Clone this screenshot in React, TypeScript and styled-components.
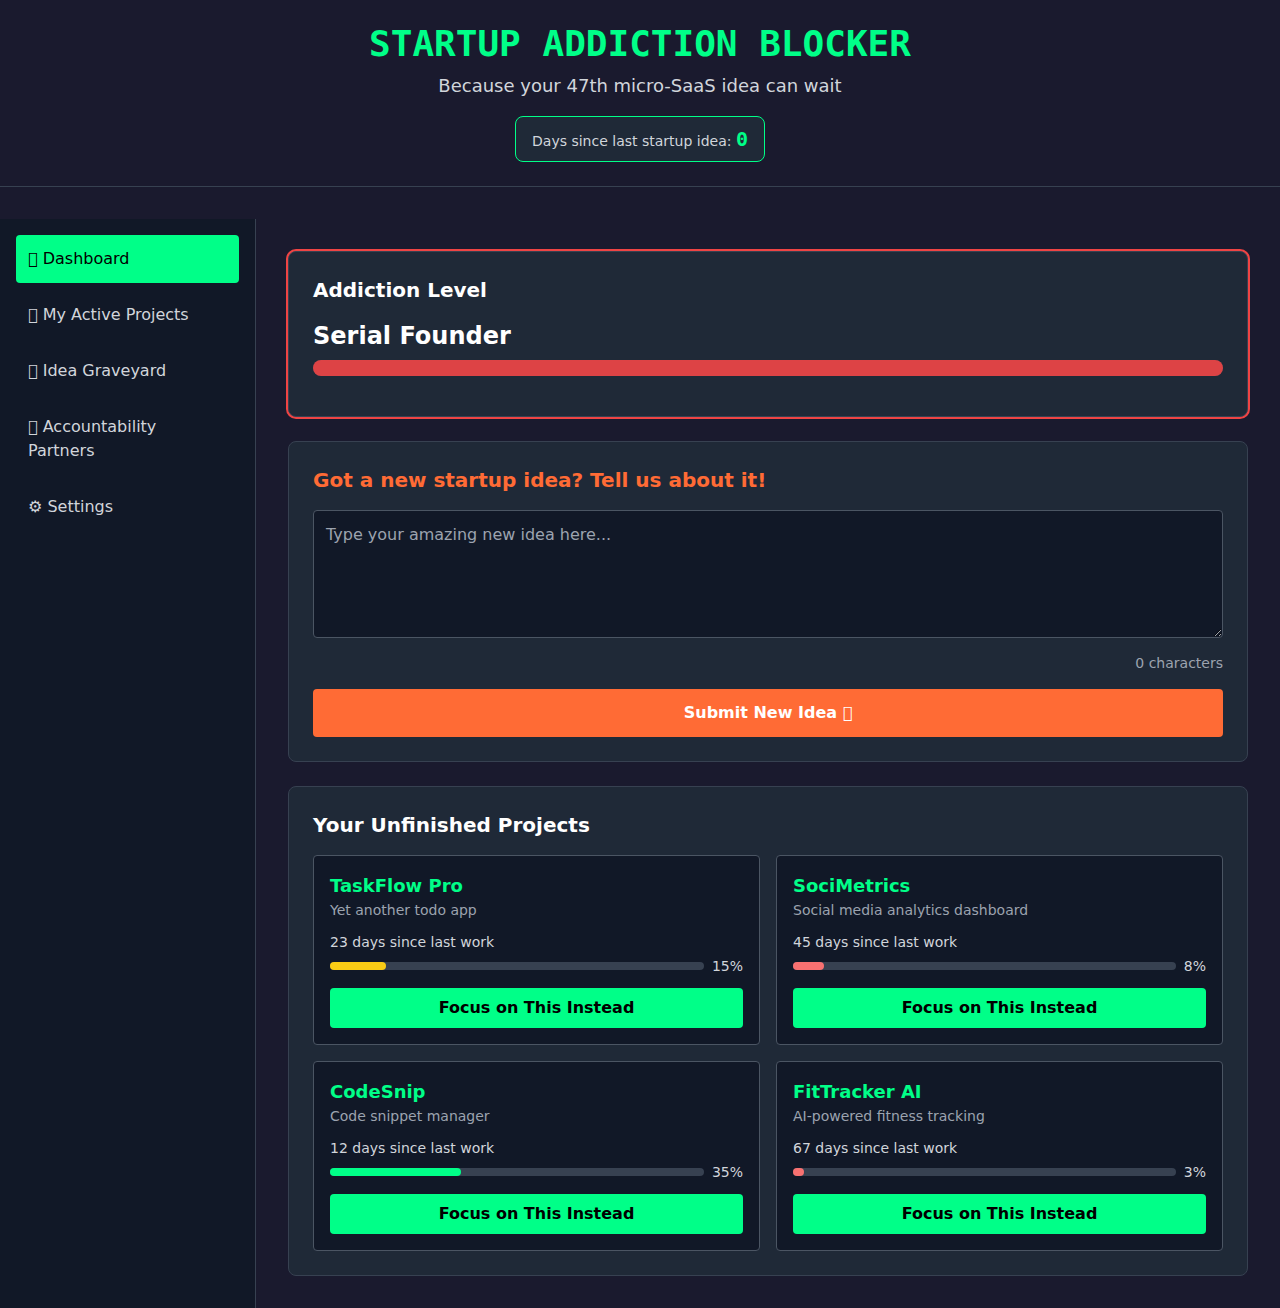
import React, { useState } from "react";
import styled, { createGlobalStyle } from "styled-components";

const sans = `"DejaVu Sans", sans-serif`;
const mono = `"DejaVu Sans Mono", monospace`;

const c = {
  page: "#1a1a2e",
  panel: "#111827",
  card: "#1f2937",
  line: "#374151",
  lineLight: "#4b5563",
  text: "#d1d5db",
  muted: "#9ca3af",
  green: "#00ff88",
  orange: "#ff6b35",
  red: "#ef4444",
};

const GlobalStyle = createGlobalStyle`
  *, *::before, *::after { box-sizing: border-box; }
  body {
    margin: 0;
    background: ${c.page};
    color: #fff;
    font-family: ${sans};
    font-size: 16px;
    line-height: 24px;
  }
  h1, h2, h3, p { margin: 0; }
  button, textarea { font: inherit; }
`;

const Header = styled.header`
  padding: 24px;
  text-align: center;
  border-bottom: 1px solid ${c.line};
`;

const Title = styled.h1`
  font: bold 36px/40px ${mono};
  color: ${c.green};
`;

const Subtitle = styled.p`
  margin-top: 8px;
  font-size: 18px;
  line-height: 28px;
  color: ${c.text};
`;

const Counter = styled.div`
  display: inline-block;
  vertical-align: top;
  margin-top: 16px;
  padding: 8px 16px;
  background: ${c.card};
  border: 1px solid ${c.green};
  border-radius: 8px;
`;

const CounterLabel = styled.span`
  font-size: 14px;
  line-height: 20px;
  color: ${c.text};
`;

const CounterValue = styled.span`
  font: bold 20px/28px ${mono};
  color: ${c.green};
`;

const Layout = styled.div`
  display: flex;
  margin-top: 32px;
`;

const Sidebar = styled.nav`
  display: flex;
  flex-direction: column;
  gap: 8px;
  width: 256px;
  flex-shrink: 0;
  padding: 16px;
  background: ${c.panel};
  border-right: 1px solid ${c.line};
`;

const NavItem = styled.button<{ $active: boolean }>`
  padding: 12px;
  border: 0;
  border-radius: 4px;
  text-align: left;
  cursor: pointer;
  background: ${(p) => (p.$active ? c.green : "transparent")};
  color: ${(p) => (p.$active ? "#000" : c.text)};
`;

const Main = styled.main`
  display: flex;
  flex: 1;
  flex-direction: column;
  gap: 24px;
  min-width: 0;
  padding: 32px;
`;

const Card = styled.section<{ $alert?: boolean }>`
  padding: 24px;
  background: ${c.card};
  border: 1px solid ${c.line};
  border-radius: 8px;
  box-shadow: ${(p) => (p.$alert ? `0 0 0 2px ${c.red}` : "none")};
`;

const CardTitle = styled.h2<{ $color?: string }>`
  margin-bottom: 16px;
  font-size: 20px;
  line-height: 28px;
  color: ${(p) => p.$color || "#fff"};
`;

const Level = styled.p`
  font-size: 24px;
  font-weight: bold;
  line-height: 32px;
`;

const LevelTrack = styled.div`
  height: 16px;
  margin: 8px 0 16px;
  border-radius: 8px;
  overflow: hidden;
  background: ${c.line};
`;

const LevelFill = styled.div`
  height: 100%;
  background: ${c.red};
  opacity: 0.9;
`;

const IdeaInput = styled.textarea`
  display: block;
  width: 100%;
  height: 128px;
  padding: 12px;
  color: #fff;
  background: ${c.panel};
  border: 1px solid ${c.lineLight};
  border-radius: 4px;
  resize: vertical;
  &::placeholder {
    color: ${c.muted};
  }
`;

const CharCount = styled.p`
  margin: 15px 0 16px;
  font-size: 14px;
  line-height: 20px;
  text-align: right;
  color: ${c.muted};
`;

const Action = styled.button<{ $tone: "orange" | "green" }>`
  display: block;
  width: 100%;
  padding: ${(p) => (p.$tone === "orange" ? 12 : 8)}px 16px;
  border: 0;
  border-radius: 4px;
  font-weight: bold;
  cursor: pointer;
  background: ${(p) => c[p.$tone]};
  color: ${(p) => (p.$tone === "orange" ? "#fff" : "#000")};
`;

const ProjectGrid = styled.div`
  display: grid;
  grid-template-columns: 1fr 1fr;
  gap: 16px;
`;

const ProjectCard = styled.article`
  padding: 16px;
  background: ${c.panel};
  border: 1px solid ${c.lineLight};
  border-radius: 4px;
`;

const ProjectName = styled.h3`
  font-size: 18px;
  line-height: 28px;
  color: ${c.green};
`;

const ProjectText = styled.p<{ $muted?: boolean }>`
  margin-bottom: ${(p) => (p.$muted ? 12 : 4)}px;
  font-size: 14px;
  line-height: 20px;
  color: ${(p) => (p.$muted ? c.muted : c.text)};
`;

const ProgressRow = styled.div`
  display: flex;
  align-items: center;
  gap: 8px;
  margin-bottom: 12px;
  font-size: 14px;
  line-height: 20px;
  color: ${c.text};
`;

const ProgressTrack = styled.div`
  flex: 1;
  height: 8px;
  border-radius: 4px;
  background: ${c.line};
`;

const ProgressFill = styled.div`
  height: 100%;
  border-radius: 4px;
`;

// Private-use code point: drawn as the font's own outlined box.
const box = "\u{10FFFD}";

const navItems = [
  `${box} Dashboard`,
  `${box} My Active Projects`,
  `${box} Idea Graveyard`,
  `${box} Accountability Partners`,
  "⚙ Settings",
];

const projects = [
  { name: "TaskFlow Pro", about: "Yet another todo app", days: 23, progress: 15 },
  { name: "SociMetrics", about: "Social media analytics dashboard", days: 45, progress: 8 },
  { name: "CodeSnip", about: "Code snippet manager", days: 12, progress: 35 },
  { name: "FitTracker AI", about: "AI-powered fitness tracking", days: 67, progress: 3 },
];

const progressColor = (value: number) =>
  value > 30 ? c.green : value > 10 ? "#facc15" : "#f87171";

export default function App() {
  const [active, setActive] = useState(0);
  const [idea, setIdea] = useState("");

  return (
    <>
      <GlobalStyle />
      <Header>
        <Title>STARTUP ADDICTION BLOCKER</Title>
        <Subtitle>Because your 47th micro-SaaS idea can wait</Subtitle>
        <Counter>
          <CounterLabel>Days since last startup idea: </CounterLabel>
          <CounterValue>0</CounterValue>
        </Counter>
      </Header>
      <Layout>
        <Sidebar>
          {navItems.map((item, i) => (
            <NavItem key={item} $active={i === active} onClick={() => setActive(i)}>
              {item}
            </NavItem>
          ))}
        </Sidebar>
        <Main>
          <Card $alert>
            <CardTitle>Addiction Level</CardTitle>
            <Level>Serial Founder</Level>
            <LevelTrack>
              <LevelFill />
            </LevelTrack>
          </Card>
          <Card>
            <CardTitle $color={c.orange}>Got a new startup idea? Tell us about it!</CardTitle>
            <IdeaInput
              placeholder="Type your amazing new idea here..."
              value={idea}
              onChange={(e) => setIdea(e.target.value)}
            />
            <CharCount>{`${idea.length} characters`}</CharCount>
            <Action $tone="orange">{`Submit New Idea ${box}`}</Action>
          </Card>
          <Card>
            <CardTitle>Your Unfinished Projects</CardTitle>
            <ProjectGrid>
              {projects.map((p) => (
                <ProjectCard key={p.name}>
                  <ProjectName>{p.name}</ProjectName>
                  <ProjectText $muted>{p.about}</ProjectText>
                  <ProjectText>{`${p.days} days since last work`}</ProjectText>
                  <ProgressRow>
                    <ProgressTrack>
                      <ProgressFill
                        style={{ width: `${p.progress}%`, background: progressColor(p.progress) }}
                      />
                    </ProgressTrack>
                    <span>{`${p.progress}%`}</span>
                  </ProgressRow>
                  <Action $tone="green">Focus on This Instead</Action>
                </ProjectCard>
              ))}
            </ProjectGrid>
          </Card>
        </Main>
      </Layout>
    </>
  );
}
